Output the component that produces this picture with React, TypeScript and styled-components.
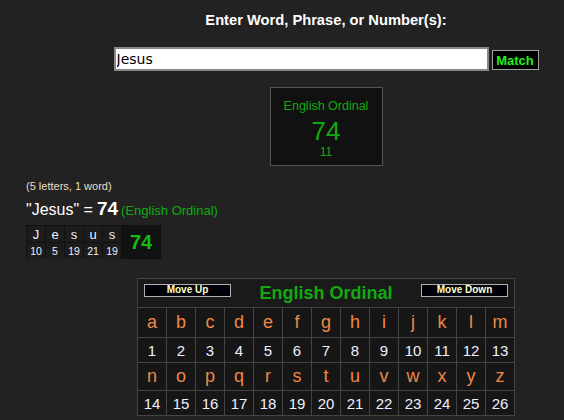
import React from "react";
import styled, { createGlobalStyle } from "styled-components";

const GlobalStyle = createGlobalStyle`
  html, body {
    margin: 0;
    padding: 0;
    background: #222222;
    overflow: hidden;
    font-family: "Liberation Sans", Arial, sans-serif;
  }
`;

const Page = styled.div`
  width: 564px;
  padding-top: 12px;
  display: flex;
  flex-direction: column;
`;

// content blocks are centred on x=326 in the original page
const Centered = styled.div`
  box-sizing: border-box;
  width: 564px;
  padding-left: 88px;
  display: flex;
  flex-direction: column;
  align-items: center;
`;

const Title = styled.div`
  color: #ffffff;
  font-weight: bold;
  font-size: 14.7px;
  line-height: 16px;
  white-space: nowrap;
`;

const SearchRow = styled.div`
  margin-top: 19px;
  display: flex;
  align-items: center;
  gap: 3px;
`;

const Input = styled.input`
  box-sizing: border-box;
  width: 375px;
  height: 24px;
  border: 2px solid #888;
  background: #fff;
  color: #000;
  font-family: "DejaVu Sans", sans-serif;
  font-size: 14px;
  padding: 0 1px;
  outline: none;
`;

const MatchButton = styled.button`
  box-sizing: border-box;
  width: 47px;
  height: 20px;
  margin-top: 2px;
  background: #000;
  border: 1px solid #a0a0a0;
  color: #22ee22;
  font-family: "Liberation Sans", Arial, sans-serif;
  font-weight: bold;
  font-size: 13px;
  padding: 0;
`;

const Card = styled.div`
  box-sizing: border-box;
  margin-top: 16px;
  width: 113px;
  height: 79px;
  background: #111111;
  border: 1px solid #555;
  display: flex;
  flex-direction: column;
  align-items: center;
  color: #11aa11;
  padding-top: 11px;
`;

const CardName = styled.div`
  font-size: 12.5px;
  line-height: 14px;
`;

const CardValue = styled.div`
  font-size: 26px;
  line-height: 30px;
  margin-top: 3px;
`;

const CardSub = styled.div`
  font-size: 12px;
  line-height: 14px;
  margin-top: -1px;
`;

const Left = styled.div`
  padding-left: 26px;
`;

const Counts = styled.div`
  margin-top: 13px;
  color: #e6dfc8;
  font-size: 11px;
  line-height: 14px;
`;

const Equation = styled.div`
  margin-top: 5px;
  color: #ffffff;
  font-size: 16px;
  line-height: 22px;
  display: flex;
  align-items: baseline;
  gap: 4px;
`;

const Big = styled.span`
  font-weight: bold;
  font-size: 19px;
`;

const GreenNote = styled.span`
  color: #11aa11;
  font-size: 13px;
  margin-left: -1px;
`;

const Breakdown = styled.div`
  margin-top: 3px;
  display: inline-flex;
  background: #111111;
  height: 34px;
`;

const LetterGrid = styled.div`
  display: grid;
  grid-template-columns: repeat(5, 18px);
  grid-template-rows: 16px 16px;
  gap: 1px;
  padding: 1px 0 0 1px;
`;

const BCell = styled.div<{ $big?: boolean }>`
  background: #1c1c1c;
  color: #eef0ff;
  font-size: ${({ $big }) => ($big ? "13px" : "10.5px")};
  display: flex;
  align-items: center;
  justify-content: center;
`;

const BTotal = styled.div`
  width: 40px;
  color: #11bb11;
  font-weight: bold;
  font-size: 20px;
  display: flex;
  align-items: center;
  justify-content: center;
`;

const Cipher = styled.div`
  margin-top: 19px;
  width: 378px;
  box-sizing: border-box;
  border: 1px solid #444;
  background: #444;
  display: grid;
  grid-template-columns: repeat(13, 1fr);
  grid-template-rows: 28px 29px 24px 27px 24px;
  gap: 1px;
`;

const Header = styled.div`
  grid-column: 1 / -1;
  background: #1a1a1a;
  display: flex;
  align-items: center;
  justify-content: space-between;
  padding: 0 6px;
`;

const MoveButton = styled.button`
  box-sizing: border-box;
  width: 87px;
  height: 13px;
  margin-top: -6px;
  background: #000008;
  border: 1px solid #b0b0b0;
  color: #ffffcc;
  font-family: "Liberation Sans", Arial, sans-serif;
  font-weight: bold;
  font-size: 10px;
  line-height: 10px;
  padding: 0;
`;

const HeaderTitle = styled.div`
  color: #11aa11;
  font-weight: bold;
  font-size: 18px;
`;

const Cell = styled.div<{ $letter?: boolean }>`
  background: #161616;
  color: ${({ $letter }) => ($letter ? "#ee8844" : "#eef0ff")};
  font-size: ${({ $letter }) => ($letter ? "18px" : "15px")};
  display: flex;
  align-items: center;
  justify-content: center;
`;

const word = "Jesus";
const alphabet = "abcdefghijklmnopqrstuvwxyz".split("");

export default function App() {
  const values = word.split("").map((c) => c.toLowerCase().charCodeAt(0) - 96);
  const total = values.reduce((a, b) => a + b, 0);
  const halves = [alphabet.slice(0, 13), alphabet.slice(13)];

  return (
    <Page>
      <GlobalStyle />
      <Centered>
        <Title>Enter Word, Phrase, or Number(s):</Title>
        <SearchRow>
          <Input defaultValue={word} />
          <MatchButton>Match</MatchButton>
        </SearchRow>
        <Card>
          <CardName>English Ordinal</CardName>
          <CardValue>{total}</CardValue>
          <CardSub>11</CardSub>
        </Card>
      </Centered>
      <Left>
        <Counts>(5 letters, 1 word)</Counts>
        <Equation>
          <span>"{word}" =</span>
          <Big>{total}</Big>
          <GreenNote>(English Ordinal)</GreenNote>
        </Equation>
        <Breakdown>
          <LetterGrid>
            {word.split("").map((c, i) => (
              <BCell key={"l" + i} $big>
                {c}
              </BCell>
            ))}
            {values.map((v, i) => (
              <BCell key={"v" + i}>{v}</BCell>
            ))}
          </LetterGrid>
          <BTotal>{total}</BTotal>
        </Breakdown>
      </Left>
      <Centered>
        <Cipher>
          <Header>
            <MoveButton>Move Up</MoveButton>
            <HeaderTitle>English Ordinal</HeaderTitle>
            <MoveButton>Move Down</MoveButton>
          </Header>
          {halves.map((row, r) => (
            <React.Fragment key={r}>
              {row.map((c) => (
                <Cell key={c} $letter>
                  {c}
                </Cell>
              ))}
              {row.map((c) => (
                <Cell key={c + "n"}>{c.charCodeAt(0) - 96}</Cell>
              ))}
            </React.Fragment>
          ))}
        </Cipher>
      </Centered>
    </Page>
  );
}
